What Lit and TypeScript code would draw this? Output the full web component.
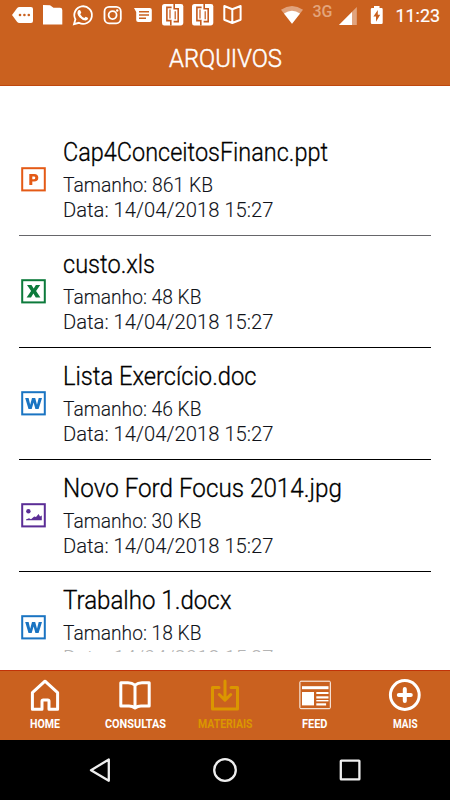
import { LitElement, html, svg, css } from "lit";
import { customElement, property } from "lit/decorators.js";

/** One line of text set to an exact width on a given baseline. */
@customElement("fit-text")
class FitText extends LitElement {
  @property() text = "";
  @property({ type: Number }) width = 100;
  @property({ type: Number }) height = 20;
  @property({ type: Number }) baseline = 15;
  static styles = css`
    :host { display: block; }
    .line { display: block; overflow: visible; }
    .glyphs { fill: currentColor; font-family: inherit; font-size: inherit; font-weight: inherit; }
  `;
  render() {
    return html`<svg class="line" width=${this.width} height=${this.height}>
      <text class="glyphs" x="0" y=${this.baseline} textLength=${this.width} lengthAdjust="spacingAndGlyphs">${this.text}</text>
    </svg>`;
  }
}

type Kind = "P" | "X" | "W" | "image";
interface FileItem { name: string; nameWidth: number; size: string; sizeWidth: number; kind: Kind; }

const files: FileItem[] = [
  { name: "Cap4ConceitosFinanc.ppt", nameWidth: 265, size: "861 KB", sizeWidth: 150, kind: "P" },
  { name: "custo.xls", nameWidth: 92, size: "48 KB", sizeWidth: 138.5, kind: "X" },
  { name: "Lista Exercício.doc", nameWidth: 193.5, size: "46 KB", sizeWidth: 138.5, kind: "W" },
  { name: "Novo Ford Focus 2014.jpg", nameWidth: 279, size: "30 KB", sizeWidth: 138.5, kind: "image" },
  { name: "Trabalho 1.docx", nameWidth: 168.5, size: "18 KB", sizeWidth: 138.5, kind: "W" },
];

const colors: Record<Kind, string> = { P: "#e45a16", X: "#0c7a3b", W: "#1a74c2", image: "#5b2d96" };

const marks = {
  P: svg`<path fill="currentColor" fill-rule="evenodd" d="M8.3 7H13.3Q17.3 7 17.3 10.8T13.2 14.6H11.3V18H8.3ZM11.3 9.4V12.3H12.7Q14.3 12.3 14.3 10.8T12.7 9.4Z"/>`,
  X: svg`<path fill="currentColor" d="M6 6H10.5L12.7 9.6L14.9 6H19.2L15.1 12L19.4 18.4H14.8L12.4 14.5L10 18.4H5.6L10.1 12Z"/>`,
  W: svg`<path fill="currentColor" d="M4.2 7H7.6L9.2 13.8L11 7H14.2L16 13.8L17.7 7H21L17.6 18H14.4L12.6 11.6L10.7 18H7.5Z"/>`,
  image: svg`<circle cx="7.4" cy="8.3" r="2.2" fill="currentColor"/><path fill="currentColor" d="M5 17.3V16.5L8 15.2L10 16.2L13.2 13.6L15 14L17.6 11L19 13.4L20.8 12.4V17.3Z"/>`,
};

const navItems = [
  { label: "HOME", width: 30, icon: svg`<path d="M5.4 32.3V15.6L18 4.2L30.6 15.6V32.3H22V24.2Q22 23 20.8 23H16.2Q15 23 15 24.2V32.3Z"/>` },
  { label: "CONSULTAS", width: 61, icon: svg`<path d="M18 8.2Q15 5.8 11 5.8H3.8V28.9H12Q15.5 28.9 18 31Q20.5 28.9 24 28.9H32.2V5.8H25Q21 5.8 18 8.2V30"/>` },
  { label: "MATERIAIS", width: 54.5, active: true, icon: svg`<path d="M12 10.5H5.5V32H30.5V10.5H24M18 4V21.5M12.3 17.5L18 23.2L23.7 17.5" stroke-linecap="round"/>` },
  { label: "FEED", width: 25.5, icon: svg`<rect x="2.9" y="4.2" width="30.4" height="27.5" rx="1" stroke-width="1"/><g fill="currentColor" stroke="none"><rect x="5" y="9.2" width="26.5" height="3"/><rect x="5" y="15" width="12" height="13.4"/><rect x="19.3" y="15" width="12.2" height="2"/><rect x="19.3" y="19.3" width="12.2" height="2.2"/><rect x="19.3" y="23" width="12.2" height="1.4"/><rect x="19.3" y="26.3" width="9.8" height="2.2"/></g>` },
  { label: "MAIS", width: 24.5, icon: svg`<circle cx="17.8" cy="18" r="14.4"/><path d="M11.8 18H23.8M17.8 12V24" stroke-width="4" stroke-linecap="round"/>` },
];

const bracketBadge = (x: number) => svg`<g transform="translate(${x} 4)">
  <path fill="#fff" d="M2.5 0H19Q21.3 0 21.3 2.3V18.5Q21.3 21.5 18.5 21.5H2.3Q0 21.5 0 19V2.5Q0 0 2.5 0Z"/>
  <path fill="none" stroke="#c55a1c" stroke-width="1.6" d="M9.6 3.4H4.9V16.6H8.8V21.5M12.2 0V4.8H16.2V17.6H11.6"/>
  <path fill="none" stroke="#c55a1c" stroke-width="1.2" d="M8 5.6V14.4M13.2 7.2V15.2"/>
</g>`;

@customElement("app-root")
class AppRoot extends LitElement {
  static styles = css`
    :host { display: flex; flex-direction: column; width: 450px; height: 800px; overflow: hidden; background: #fff; font-family: Roboto, "Open Sans", sans-serif; color: #000; }
    .status { height: 32px; flex: none; background: #ca611f; }
    .status svg { display: block; }
    .g3 { font: 500 16px Roboto, sans-serif; fill: #e3a57c; }
    .clock { font: 400 18px Roboto, sans-serif; fill: #fff; stroke: #fff; stroke-width: .2px; }
    .header { box-sizing: border-box; height: 54px; flex: none; background: #ca611f; border-bottom: 1px solid #bf480e; color: #fff; display: flex; justify-content: center; font-size: 26.5px; font-weight: 300; }
    .header fit-text { stroke: #fff; stroke-width: .5px; }
    .list { box-sizing: border-box; height: 566px; flex: none; overflow: hidden; padding: 38px 19px 0; }
    .row { box-sizing: border-box; height: 112px; border-bottom: 1px solid #000; display: flex; }
    .row:first-child { border-color: #66666a; }
    .row:last-child { border: none; }
    .icon { width: 25px; height: 25px; margin: 43px 17px 0 2px; flex: none; }
    .info { padding-top: 14px; }
    .name { font-size: 25.5px; font-weight: 300; stroke: #000; stroke-width: .3px; }
    .meta { font-size: 20.5px; font-weight: 300; color: #10131a; stroke: #10131a; stroke-width: .1px; }
    .row:last-child .date { color: #b4b4b4; stroke: none; }
    .nav { box-sizing: border-box; height: 70px; flex: none; margin-top: 18px; background: #ca611f; border-top: 1px solid #c13208; display: grid; grid-template-columns: repeat(5, 1fr); color: #fff; }
    .tab { display: flex; flex-direction: column; align-items: center; padding-top: 6px; font-size: 12px; font-weight: 700; }
    .tab.active { color: #db9600; }
    .tab svg { fill: none; stroke: currentColor; stroke-width: 3; stroke-linejoin: round; }
    .system { height: 60px; flex: none; background: #000; }
    .system svg { display: block; fill: none; stroke: #eee; stroke-width: 2.3; stroke-linejoin: round; }
  `;

  render() {
    return html`
      <div class="status">
        <svg width="450" height="32" fill="#fff">
          <path d="M12 15L17.2 8Q18 7 19.5 7H31Q33 7 33 9V21Q33 23 31 23H19.5Q18 23 17.2 22Z"/>
          <g fill="#ca611f"><circle cx="20" cy="15" r="1.3"/><circle cx="24.4" cy="15" r="1.3"/><circle cx="28.8" cy="15" r="1.3"/></g>
          <path d="M43 5L50 5.3L53.5 7.8H60Q62.3 7.8 62.3 10V24.5H43Z"/>
          <path fill="none" stroke="#fff" stroke-width="1.8" d="M74 24.2L75.4 19.3A8.8 8.8 0 1 1 78.9 22.8Z"/>
          <path d="M78.4 10.3Q79.8 9.3 80.5 10.7L81.3 12.8L80.2 14.3Q81.7 17 84.3 18L85.7 16.7L88.2 18Q88 20.2 85.7 20.4Q82.5 20.5 79.4 17.2Q76 13.2 78.4 10.3Z"/>
          <g fill="none" stroke="#fff" stroke-width="1.8"><rect x="104.5" y="6.9" width="16.3" height="16.4" rx="4.6"/><circle cx="112.6" cy="15.1" r="4"/></g><circle cx="117.2" cy="10.5" r="1.2"/>
          <path d="M134 8H149.8Q151.8 8 151.8 10V20Q151.8 22 149.8 22H138.2Q136.2 22 136.2 20V12Z"/>
          <path stroke="#ca611f" stroke-width="1.5" d="M139 11.8H149M139 15H149M139 18.2H146"/>
          ${bracketBadge(162)}${bracketBadge(192)}
          <path fill="none" stroke="#fff" stroke-width="2" stroke-linejoin="round" d="M232.3 9.2L224.3 6V19.8L232.3 23L240.6 19.8V6ZM232.3 9.2V23"/>
          <path fill="#e1a37d" d="M281 9.7Q292 2.5 303 9.7L292 23.8Z"/><path d="M284 13.4Q292 8 300 13.4L292 23.8Z"/>
          <text class="g3" x="312.5" y="16.6" textLength="20" lengthAdjust="spacingAndGlyphs">3G</text>
          <path fill="#e1a37d" d="M356.8 7V25H339Z"/><path d="M352 12V25H339Z"/>
          <path fill-rule="evenodd" d="M374 6H379.5V8H381.5Q382.7 8 382.7 9.2V22.8Q382.7 24 381.5 24H372Q370.8 24 370.8 22.8V9.2Q370.8 8 372 8H374ZM377.8 10L373.4 16.4H376V21.8L380.2 14.8H377.8Z"/>
          <text class="clock" x="395.5" y="22" textLength="44.5" lengthAdjust="spacingAndGlyphs">11:23</text>
        </svg>
      </div>
      <div class="header"><fit-text text="ARQUIVOS" width="113" height="53" baseline="35.3"></fit-text></div>
      <div class="list">
        ${files.map((f) => html`<div class="row">
          <svg class="icon" viewBox="0 0 25 25" color=${colors[f.kind]}>
            <rect x="1.2" y="1.2" width="22.6" height="22.2" fill="#fff" stroke="currentColor" stroke-width="2"/>${marks[f.kind]}
          </svg>
          <div class="info">
            <fit-text class="name" text=${f.name} .width=${f.nameWidth} height="34" baseline="22.7"></fit-text>
            <fit-text class="meta" text=${"Tamanho: " + f.size} .width=${f.sizeWidth} height="25" baseline="20.3"></fit-text>
            <fit-text class="meta date" text="Data: 14/04/2018 15:27" width="210.5" height="25" baseline="20.2"></fit-text>
          </div>
        </div>`)}
      </div>
      <div class="nav">
        ${navItems.map((n) => html`<div class="tab ${n.active ? "active" : ""}">
          <svg width="36" height="36" viewBox="0 0 36 36">${n.icon}</svg>
          <fit-text text=${n.label} .width=${n.width} height="20" baseline="14.8"></fit-text>
        </div>`)}
      </div>
      <div class="system">
        <svg width="450" height="60"><path d="M91 30.2L108.8 19.5V40.8Z"/><circle cx="225" cy="30" r="10.8"/><rect x="340.8" y="20.6" width="18.6" height="18.8" rx=".5"/></svg>
      </div>`;
  }
}
